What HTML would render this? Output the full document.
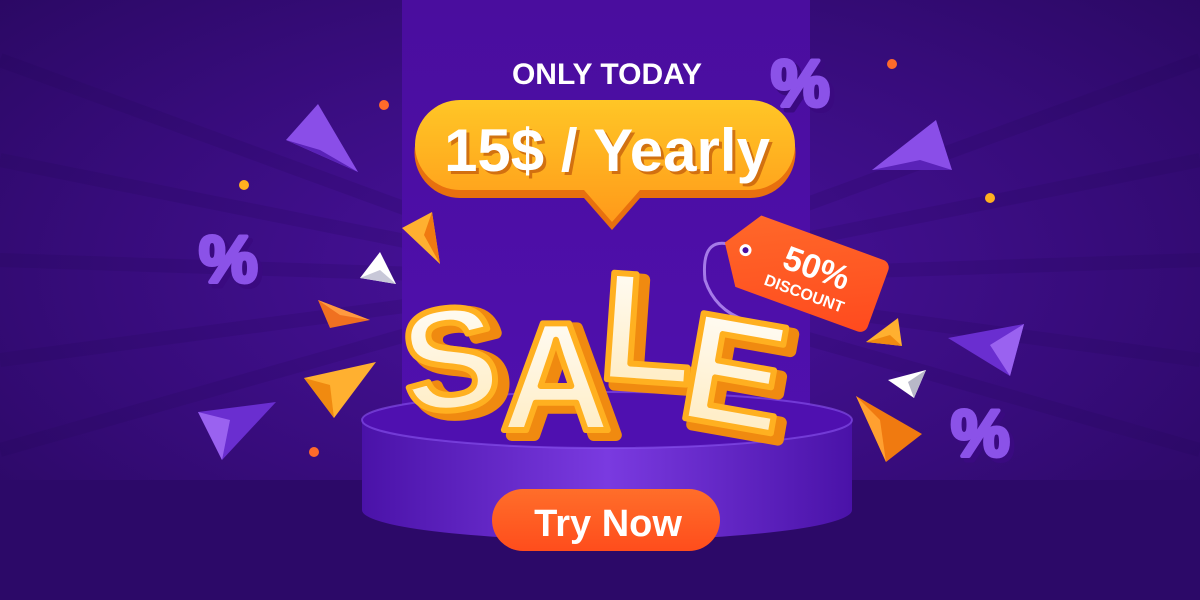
<!DOCTYPE html>
<html><head><meta charset="utf-8"><style>
html,body{margin:0;padding:0;width:1200px;height:600px;overflow:hidden;background:#2d0a6a}
svg{display:block}
</style></head><body>
<svg width="1200" height="600" viewBox="0 0 1200 600" xmlns="http://www.w3.org/2000/svg">
<defs>
<radialGradient id="bg" cx="0.5" cy="0.45" r="0.7">
<stop offset="0" stop-color="#4a12a0"/><stop offset="1" stop-color="#2a0862"/></radialGradient>
<linearGradient id="panel" x1="0" y1="0" x2="0" y2="1">
<stop offset="0" stop-color="#4a0d9e"/><stop offset="1" stop-color="#5010b0"/></linearGradient>
<linearGradient id="pod" x1="0" y1="0" x2="1" y2="0">
<stop offset="0" stop-color="#4a12a8"/><stop offset="0.5" stop-color="#7a3ae0"/><stop offset="1" stop-color="#4a12a8"/></linearGradient>
<linearGradient id="bub" x1="0" y1="0" x2="0" y2="1">
<stop offset="0" stop-color="#ffc626"/><stop offset="1" stop-color="#ff9a1a"/></linearGradient>
<linearGradient id="tag" x1="0" y1="0" x2="1" y2="1">
<stop offset="0" stop-color="#ff6a2a"/><stop offset="1" stop-color="#ff4a1e"/></linearGradient>
<linearGradient id="let" x1="0" y1="0" x2="0" y2="1">
<stop offset="0" stop-color="#ffffff"/><stop offset="1" stop-color="#ffe9b8"/></linearGradient>
<linearGradient id="btn" x1="0" y1="0" x2="0" y2="1">
<stop offset="0" stop-color="#ff6e2a"/><stop offset="1" stop-color="#ff4d1c"/></linearGradient>
</defs>
<rect width="1200" height="600" fill="url(#bg)"/>
<g stroke="#230758" stroke-width="14" opacity="0.18">
<line x1="600" y1="280" x2="0" y2="60"/><line x1="600" y1="280" x2="0" y2="160"/><line x1="600" y1="280" x2="0" y2="260"/><line x1="600" y1="280" x2="0" y2="360"/><line x1="600" y1="280" x2="0" y2="450"/>
<line x1="600" y1="280" x2="1200" y2="60"/><line x1="600" y1="280" x2="1200" y2="160"/><line x1="600" y1="280" x2="1200" y2="260"/><line x1="600" y1="280" x2="1200" y2="360"/><line x1="600" y1="280" x2="1200" y2="450"/>
</g>
<rect x="0" y="480" width="1200" height="120" fill="#2c0968"/>
<rect x="402" y="0" width="408" height="480" fill="url(#panel)"/>
<path d="M362 420 L362 510 A244 30 0 0 0 852 510 L852 420 Z" fill="url(#pod)"/>
<ellipse cx="607" cy="420" rx="245" ry="28" fill="#4f10b0"/>
<ellipse cx="607" cy="420" rx="245" ry="28" fill="none" stroke="#8a55f0" stroke-width="2" opacity="0.6"/>
<path d="M460 107 H750 A42 42 0 0 1 750 198 H640 L612 230 L584 198 H460 A42 42 0 0 1 460 107 Z" fill="#e8700e"/>
<path d="M460 100 H750 A42 42 0 0 1 750 190 H640 L612 222 L584 190 H460 A42 42 0 0 1 460 100 Z" fill="url(#bub)"/>
<text x="607" y="84" text-anchor="middle" font-family="Liberation Sans,sans-serif" font-weight="bold" font-size="30" fill="#fff">ONLY TODAY</text>
<text x="610" y="174" text-anchor="middle" font-family="Liberation Sans,sans-serif" font-weight="bold" font-size="60" fill="#c0570a" opacity="0.7">15$ / Yearly</text>
<text x="607" y="171" text-anchor="middle" font-family="Liberation Sans,sans-serif" font-weight="bold" font-size="60" fill="#fff">15$ / Yearly</text>
<path d="M740 248 Q700 230 705 280 Q715 310 745 320" fill="none" stroke="#a57ae8" stroke-width="3"/>
<g transform="rotate(20 800 270)">
<path d="M745 232 H875 A8 8 0 0 1 883 240 V300 A8 8 0 0 1 875 308 H745 L720 270 Z" fill="url(#tag)"/>
<circle cx="742" cy="270" r="6" fill="#fff"/><circle cx="742" cy="270" r="3" fill="#4a0d9e"/>
<text x="815" y="274" text-anchor="middle" font-family="Liberation Sans,sans-serif" font-weight="bold" font-size="34" fill="#fff">50%</text>
<text x="812" y="296" text-anchor="middle" font-family="Liberation Sans,sans-serif" font-weight="bold" font-size="16" fill="#fff">DISCOUNT</text>
</g>
<g font-family="Liberation Sans,DejaVu Sans,sans-serif" font-weight="bold" stroke-linejoin="round">
<text x="410" y="412" font-size="145" fill="#f08a10" stroke="#f08a10" stroke-width="12" transform="rotate(-6 470 360)">S</text>
<text x="402" y="407" font-size="145" fill="url(#let)" stroke="#ffb020" stroke-width="6" transform="rotate(-6 470 360)">S</text>
<text x="508" y="435" font-size="155" fill="#f08a10" stroke="#f08a10" stroke-width="12">A</text>
<text x="500" y="430" font-size="155" fill="url(#let)" stroke="#ffb020" stroke-width="6">A</text>
<text x="608" y="387" font-size="155" fill="#f08a10" stroke="#f08a10" stroke-width="12" transform="rotate(4 650 330)">L</text>
<text x="600" y="382" font-size="155" fill="url(#let)" stroke="#ffb020" stroke-width="6" transform="rotate(4 650 330)">L</text>
<text x="692" y="432" font-size="155" fill="#f08a10" stroke="#f08a10" stroke-width="12" transform="rotate(10 740 370)">E</text>
<text x="684" y="427" font-size="155" fill="url(#let)" stroke="#ffb020" stroke-width="6" transform="rotate(10 740 370)">E</text>
</g>
<rect x="492" y="489" width="228" height="62" rx="31" fill="url(#btn)"/>
<text x="608" y="536" text-anchor="middle" font-family="Liberation Sans,sans-serif" font-weight="bold" font-size="38" fill="#fff">Try Now</text>
<g font-family="Liberation Sans,sans-serif" font-weight="bold" font-size="66" stroke-linejoin="round">
<text x="203" y="286" fill="#3a0a80" stroke="#3a0a80" stroke-width="5">%</text><text x="199" y="282" fill="#8b52e8" stroke="#8b52e8" stroke-width="4">%</text>
<text x="775" y="110" fill="#3a0a80" stroke="#3a0a80" stroke-width="5">%</text><text x="771" y="106" fill="#8b52e8" stroke="#8b52e8" stroke-width="4">%</text>
<text x="955" y="460" fill="#3a0a80" stroke="#3a0a80" stroke-width="5">%</text><text x="951" y="456" fill="#8b52e8" stroke="#8b52e8" stroke-width="4">%</text>
</g>
<g>
<polygon points="286,140 318,104 358,172" fill="#8a4ee8"/><polygon points="286,140 358,172 320,150" fill="#5a22b8"/>
<polygon points="872,170 936,120 952,170" fill="#8a4ee8"/><polygon points="872,170 952,170 920,160" fill="#5a22b8"/>
<polygon points="198,412 276,402 222,460" fill="#6a2ed0"/><polygon points="198,412 222,460 230,420" fill="#9a62f0"/>
<polygon points="948,338 1024,324 1010,376" fill="#6a2ed0"/><polygon points="1024,324 1010,376 990,345" fill="#9a62f0"/>
<polygon points="402,228 432,212 440,264" fill="#ffb030"/><polygon points="432,212 440,264 424,235" fill="#f07a10"/>
<polygon points="318,300 330,328 370,320" fill="#f07020"/><polygon points="318,300 370,320 340,315" fill="#ff9a40"/>
<polygon points="304,378 376,362 334,418" fill="#ffb030"/><polygon points="304,378 334,418 330,385" fill="#f08a10"/>
<polygon points="866,342 898,318 902,346" fill="#ffb030"/><polygon points="866,342 902,346 890,335" fill="#f08a10"/>
<polygon points="856,396 922,434 886,462" fill="#f07a10"/><polygon points="856,396 886,462 880,420" fill="#ffa030"/>
<polygon points="360,278 380,252 396,284" fill="#ffffff"/><polygon points="360,278 396,284 380,270" fill="#c8c8d8"/>
<polygon points="888,380 926,370 914,398" fill="#ffffff"/><polygon points="926,370 914,398 908,382" fill="#b8b8c8"/>
</g>
<g>
<circle cx="384" cy="105" r="5" fill="#ff6a2a"/><circle cx="244" cy="185" r="5" fill="#ffb020"/>
<circle cx="892" cy="64" r="5" fill="#ff6a2a"/><circle cx="990" cy="198" r="5" fill="#ffb020"/>
<circle cx="314" cy="452" r="5" fill="#ff6a2a"/>
</g>
</svg>
</body></html>
